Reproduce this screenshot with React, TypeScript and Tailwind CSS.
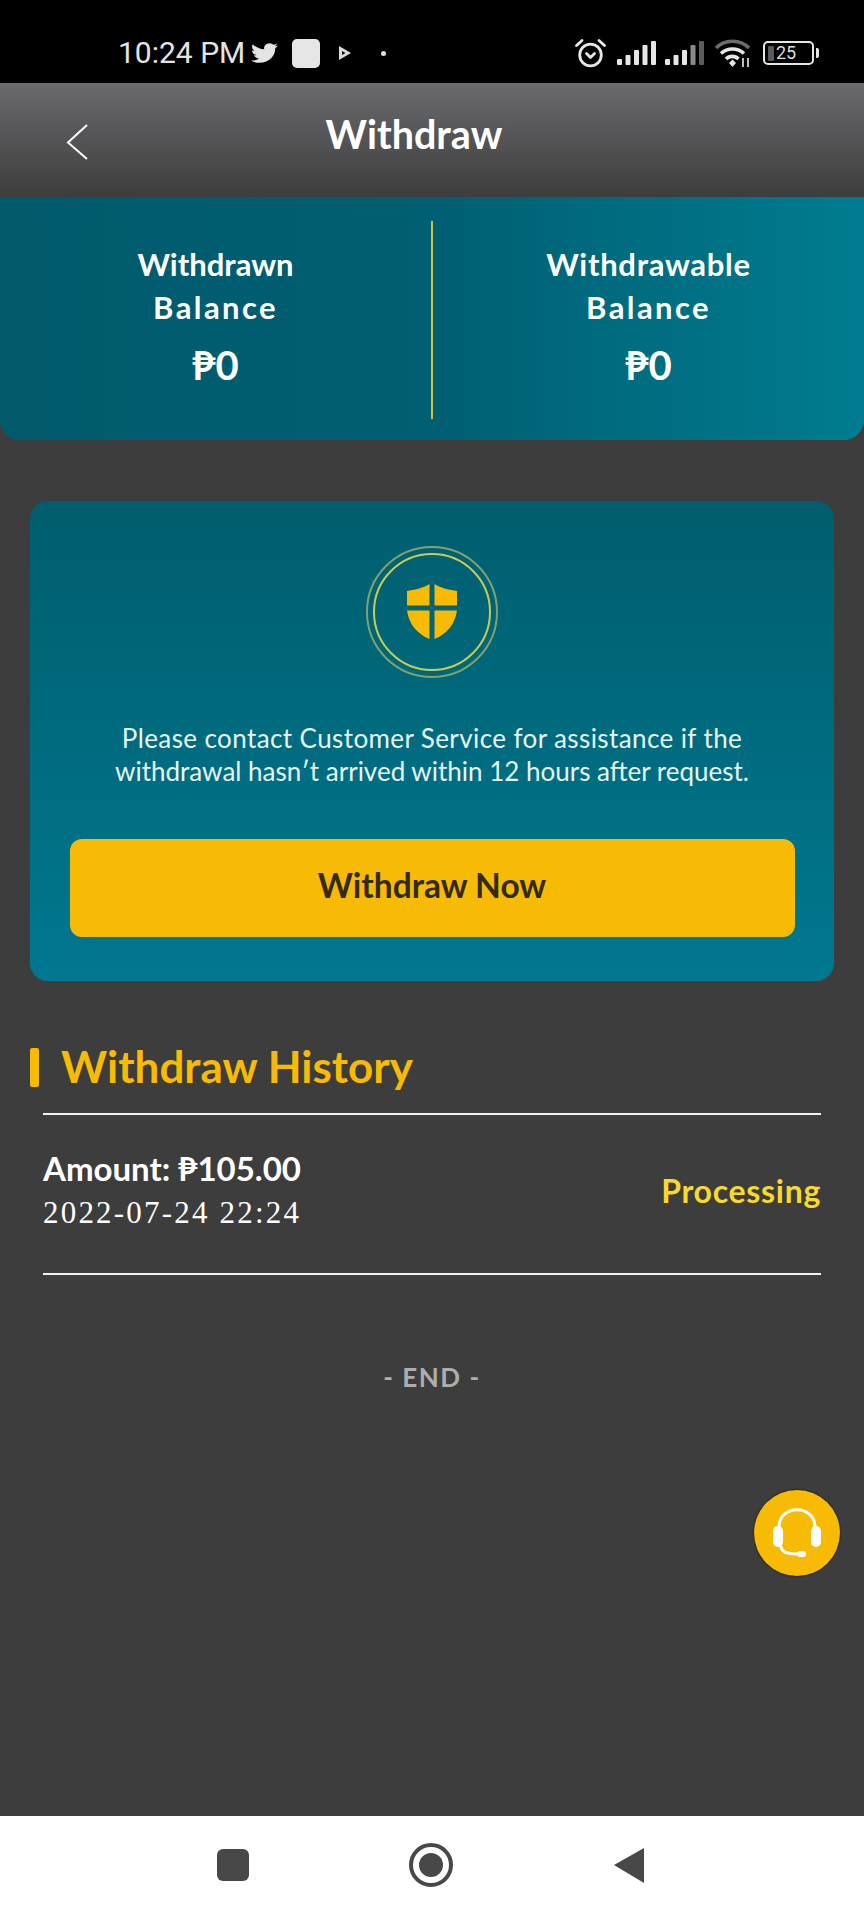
const FONT = "font-['Lato','Noto_Sans',sans-serif]";

function Twitter() {
  return (
    <svg viewBox="0 0 24 24" className="h-[24px] w-[27px] fill-[#e4e4e4]" preserveAspectRatio="none">
      <path d="M23.95 4.57a10 10 0 0 1-2.82.77 4.96 4.96 0 0 0 2.16-2.72c-.95.55-2 .96-3.13 1.18a4.92 4.92 0 0 0-8.38 4.48C7.69 8.1 4.07 6.13 1.64 3.16a4.82 4.82 0 0 0-.67 2.48c0 1.71.87 3.21 2.19 4.1a4.9 4.9 0 0 1-2.23-.61v.06a4.92 4.92 0 0 0 3.95 4.83 5 5 0 0 1-2.21.08 4.94 4.94 0 0 0 4.6 3.42A9.87 9.87 0 0 1 0 19.54a13.94 13.94 0 0 0 7.55 2.21c9.05 0 14-7.5 14-13.98l-.02-.64a9.94 9.94 0 0 0 2.42-2.56z" />
    </svg>
  );
}

function PlayMark() {
  return (
    <svg viewBox="0 0 14 16" className="h-[16px] w-[14px]">
      <path d="M1 1 L13 8 L1 15 Z M4 6 V10 L7.5 8 Z" fill="#dcdcdc" fillRule="evenodd" />
    </svg>
  );
}

function Alarm() {
  return (
    <svg viewBox="0 0 33 30" className="h-[30px] w-[33px]" fill="none" stroke="#e8e8e8">
      <circle cx="16.5" cy="17" r="10.8" strokeWidth="2.8" />
      <path d="M2.5 7.5 L8 2.5 M30.5 7.5 L25 2.5" strokeWidth="2.8" strokeLinecap="round" />
      <path d="M12.5 15.5 L16.5 19.5 L20.5 15.5" strokeWidth="2.8" strokeLinecap="round" strokeLinejoin="round" />
    </svg>
  );
}

function Signal({ dim }: { dim?: boolean }) {
  const bars = [
    { h: 6, x: 0 },
    { h: 10, x: 8.5 },
    { h: 15, x: 17 },
    { h: 20, x: 25.5 },
    { h: 24, x: 34 },
  ];
  return (
    <svg viewBox="0 0 39 24" className="h-[24px] w-[39px]">
      {bars.map((b, i) => (
        <rect
          key={b.x}
          x={b.x}
          y={24 - b.h}
          width="5"
          height={b.h}
          rx="1"
          fill={dim && i === 4 ? "#5c5c5c" : dim && i === 3 ? "#8a8a8a" : "#e6e6e6"}
        />
      ))}
    </svg>
  );
}

function Wifi() {
  return (
    <svg viewBox="0 0 38 28" className="h-[28px] w-[38px]" fill="none">
      <path d="M2 9 C11 0 26 0 35 9" stroke="#6c6c6c" strokeWidth="3.6" />
      <path d="M7 14.5 C13.5 8.5 23.5 8.5 30 14.5" stroke="#e6e6e6" strokeWidth="3.6" />
      <path d="M12 20 C15.5 16.5 21 16.5 24.5 20" stroke="#e6e6e6" strokeWidth="3.6" />
      <path d="M15 24 L18.5 20.5 L22 24 L18.5 28 Z" fill="#e6e6e6" />
      <path d="M29 19 V28 M34 19 V28" stroke="#bdbdbd" strokeWidth="2" />
    </svg>
  );
}

function Battery() {
  return (
    <div className="flex items-center gap-[2px]">
      <div className="flex h-[24px] w-[51px] items-center gap-[2px] rounded-[5px] border-2 border-[#e6e6e6] px-[3px]">
        <div className="h-[15px] w-[6px] rounded-[1px] bg-[#5a5a5a]" />
        <span className="font-['Roboto',sans-serif] text-[18px] leading-none text-[#dedede]">25</span>
      </div>
      <div className="h-[10px] w-[3px] rounded-r-[2px] bg-[#e6e6e6]" />
    </div>
  );
}

function StatusBar() {
  return (
    <div className="flex h-[83px] shrink-0 items-center justify-between bg-black pl-[118px] pr-[45px] pt-[23px]">
      <div className="flex items-center">
        <span className="font-['Roboto',sans-serif] text-[30px] leading-none text-[#e4e4e4]">10:24 PM</span>
        <div className="ml-[6px]">
          <Twitter />
        </div>
        <div className="ml-[14px] h-[29px] w-[28px] rounded-[5px] bg-[#e6e6e6]" />
        <div className="ml-[18px]">
          <PlayMark />
        </div>
        <div className="ml-[29px] h-[5px] w-[5px] rounded-full bg-[#e0e0e0]" />
      </div>
      <div className="flex items-center">
        <Alarm />
        <div className="ml-[10px]">
          <Signal />
        </div>
        <div className="ml-[9px]">
          <Signal dim />
        </div>
        <div className="ml-[10px]">
          <Wifi />
        </div>
        <div className="ml-[11px]">
          <Battery />
        </div>
      </div>
    </div>
  );
}

function Header() {
  return (
    <div className="relative flex h-[114px] shrink-0 items-start justify-center bg-gradient-to-b from-[#6b6b6f] to-[#3d3d3d] pt-[28px]">
      <svg viewBox="0 0 24 38" className="absolute left-[65px] top-[40px] h-[38px] w-[24px]" fill="none" stroke="#ffffff" strokeWidth="2">
        <path d="M22 2 L3 19.5 L22 36" />
      </svg>
      <span className="mr-[36px] text-[39.5px] font-bold leading-[46px] text-white">Withdraw</span>
    </div>
  );
}

function BalanceCell({ label, value }: { label: string; value: string }) {
  return (
    <div className="flex flex-1 flex-col items-center pb-[7px] text-white">
      <div className="w-[260px] text-center text-[31px] font-bold leading-[43px]">
        <span className={label === "Withdrawable" ? "tracking-[0.7px]" : ""}>{label}</span>
        <br />
        <span className="tracking-[2.4px]">Balance</span>
      </div>
      <div className="mt-[15px] text-[40px] font-bold leading-[43px]">{value}</div>
    </div>
  );
}

function ShieldBadge() {
  return (
    <div className="flex h-[132px] w-[132px] items-center justify-center rounded-full border-2 border-[#7fa36e]">
      <div className="flex h-[118px] w-[118px] items-center justify-center rounded-full border-2 border-[#c8cc55]">
        <svg viewBox="0 0 52 58" className="h-[58px] w-[52px]">
          <path d="M23.5 1 C17 5 8 7 1 8 V22.5 H23.5 Z M28.5 1 C35 5 44 7 51 8 V22.5 H28.5 Z M1 27.5 H23.5 V56 C11 51 3 41 1 27.5 Z M28.5 27.5 H51 C49 41 41 51 28.5 56 Z" fill="#f7bb05" />
        </svg>
      </div>
    </div>
  );
}

function Headset() {
  return (
    <svg viewBox="0 0 48 50" className="h-[50px] w-[48px]" fill="none" stroke="#fff">
      <path d="M6 22 V19 C6 -4 42 -4 42 19 V22" strokeWidth="3" />
      <path d="M8 38 C8 43 13 46 24 46" strokeWidth="3" />
      <rect x="24" y="43" width="9" height="6" rx="3" fill="#fff" stroke="none" />
      <rect x="0" y="18" width="10" height="21" rx="5" fill="#fff" stroke="none" />
      <rect x="38" y="18" width="10" height="21" rx="5" fill="#fff" stroke="none" />
    </svg>
  );
}

function NavBar() {
  return (
    <div className="flex h-[104px] shrink-0 items-center justify-center bg-white">
      <div className="flex items-center gap-[160px] pb-[6px] pr-[3px]">
        <div className="h-[32px] w-[32px] rounded-[6px] bg-[#484848]" />
        <div className="flex h-[44px] w-[44px] items-center justify-center rounded-full border-[4px] border-[#484848]">
          <div className="h-[24px] w-[24px] rounded-full bg-[#484848]" />
        </div>
        <svg viewBox="0 0 32 36" className="h-[36px] w-[32px]">
          <path d="M1 18 L31 1 V36 Z" fill="#484848" />
        </svg>
      </div>
    </div>
  );
}

export default function App() {
  return (
    <div className={`flex h-[1920px] w-[864px] flex-col overflow-hidden bg-[#3d3d3d] ${FONT}`}>
      <StatusBar />
      <Header />
      <div className="relative flex flex-1 flex-col">
        <div className="flex h-[243px] items-center rounded-b-[20px] bg-gradient-to-r from-[#005a6c] via-[#005f72] to-[#007c90]">
          <BalanceCell label="Withdrawn" value="₱0" />
          <div className="mt-[3px] h-[198px] w-[2px] bg-[#d0c43a]" />
          <BalanceCell label="Withdrawable" value="₱0" />
        </div>

        <div className="mx-[30px] mt-[61px] flex h-[480px] flex-col items-center rounded-[18px] bg-gradient-to-b from-[#005e6e] to-[#007890] px-[40px] pt-[45px]">
          <ShieldBadge />
          <p className="mt-[44px] text-center text-[26px] leading-[33px] text-[#e6f4f4]">
            <span className="tracking-[0.4px]">Please contact Customer Service for assistance if the</span>
            <br />
            <span>withdrawal hasn′t arrived within 12 hours after request.</span>
          </p>
          <div className="mt-[51px] flex h-[98px] w-[725px] shrink-0 items-center justify-center rounded-[12px] bg-[#f7bb05] pb-[6px] text-[33.5px] font-bold text-[#332b14]">
            Withdraw Now
          </div>
        </div>

        <div className="ml-[30px] mt-[67px] flex h-[39px] items-center">
          <div className="h-[39px] w-[9px] rounded-[2px] bg-[#f7bb05]" />
          <span className="ml-[22px] pb-[4px] text-[44px] font-bold leading-none text-[#f7bb05]">Withdraw History</span>
        </div>

        <div className="mx-[43px] mt-[26px] flex h-[162px] items-center justify-between border-y-2 border-[#f2f2f2] pb-[6px]">
          <div className="text-white">
            <div className="pb-[2px] text-[33px] font-bold leading-[42px]">Amount: ₱105.00</div>
            <div className="font-['Liberation_Serif',serif] text-[31px] leading-[44px] tracking-[2.2px]">2022-07-24 22:24</div>
          </div>
          <span className="text-[32px] font-bold tracking-[0.7px] text-[#f9d92c]">Processing</span>
        </div>

        <div className="mt-[87px] text-center text-[26px] font-bold leading-[30px] tracking-[1.5px] text-[#aeaeae]">- END -</div>

        <div className="absolute left-[754px] top-[1293px] flex h-[86px] w-[86px] items-center justify-center rounded-full bg-[#f7bb05] shadow-[0_0_2px_#000]">
          <Headset />
        </div>
      </div>
      <NavBar />
    </div>
  );
}
